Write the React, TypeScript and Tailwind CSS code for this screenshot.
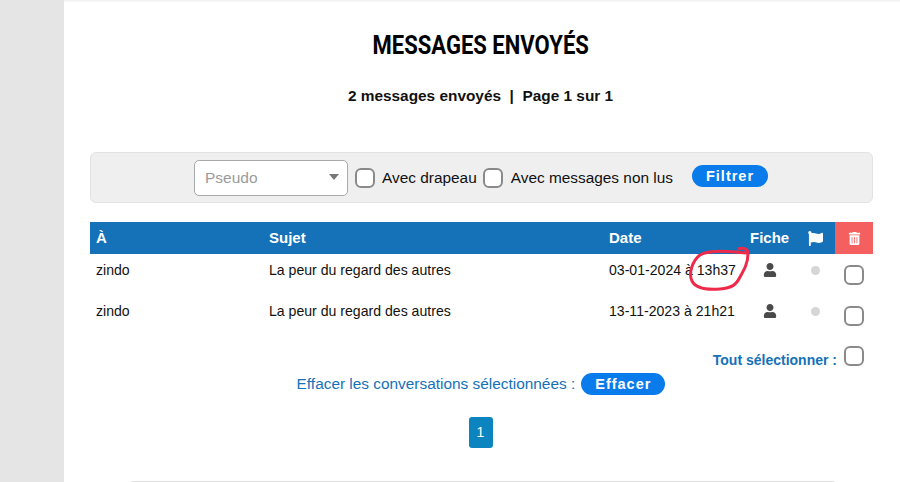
import { FaFlag, FaTrashAlt, FaUser } from 'react-icons/fa'

const rows = [
  { to: 'zindo', subject: 'La peur du regard des autres', date: '03-01-2024 à 13h37' },
  { to: 'zindo', subject: 'La peur du regard des autres', date: '13-11-2023 à 21h21' },
]

const columns = 'grid grid-cols-[173px_340px_141px_58px_27px_38px] pl-[6px]'

function Checkbox({ className = '' }: { className?: string }) {
  return (
    <span className={`block size-[20px] shrink-0 rounded-[6px] border-2 border-[#8a8a8a] bg-white ${className}`} />
  )
}

function PillButton({ label }: { label: string }) {
  return (
    <button className="h-[22px] rounded-full bg-[#0a7bea] px-[14px] text-[14.5px] leading-[22px] font-bold tracking-[1px] text-white">
      {label}
    </button>
  )
}

export default function App() {
  return (
    <div className="flex h-[482px] overflow-hidden bg-[#e5e5e5] font-['Liberation_Sans',Arial,sans-serif] text-[14.1px] text-[#111]">
      <aside className="w-[64px] shrink-0" />

      <main className="relative flex-1 overflow-hidden bg-white px-[26px] shadow-[inset_0_3px_3px_-2px_rgba(0,0,0,0.08)]">
        <h1 className="mt-[30px] text-center font-['Roboto',sans-serif] text-[26px] leading-[30px] font-bold text-black">
          <span className="inline-block translate-x-[-1px] scale-x-[0.847] whitespace-nowrap">MESSAGES ENVOYÉS</span>
        </h1>

        <p className="mt-[27px] pr-[3px] text-center text-[15.4px] leading-[18px] font-bold">
          2 messages envoyés &nbsp;|&nbsp; Page 1 sur 1
        </p>

        <form className="mt-[47px] flex h-[51px] w-[783px] items-center rounded-[6px] border border-[#e2e2e2] bg-[#efefef] pl-[103px] text-[15.4px]">
          <div className="flex h-[36px] w-[154px] items-center justify-between rounded-[5px] border border-[#a9a9a9] bg-white pr-[8px] pl-[10px] text-[15.5px] text-[#9b9b9b]">
            Pseudo
            <span className="mt-[-2px] border-x-[5px] border-t-[6px] border-x-transparent border-t-[#777]" />
          </div>
          <Checkbox className="ml-[7px]" />
          <span className="ml-[7px]">Avec drapeau</span>
          <Checkbox className="ml-[6px]" />
          <span className="ml-[8px]">Avec messages non lus</span>
          <span className="mt-[-4px] ml-[19px] flex">
            <PillButton label="Filtrer" />
          </span>
        </form>

        <div className="mt-[19px] w-[783px]">
          <div className={`${columns} h-[32px] items-center bg-[#1571b8] text-[15px] font-bold text-white`}>
            <span>À</span>
            <span>Sujet</span>
            <span>Date</span>
            <span>Fiche</span>
            <span className="flex">
              <FaFlag className="size-[15px]" />
            </span>
            <span className="flex h-[32px] items-center justify-center bg-[#f45f5f]">
              <FaTrashAlt className="size-[13px]" />
            </span>
          </div>

          {rows.map((row) => (
            <div key={row.date} className={`${columns} h-[41px] items-center`}>
              <span className="mt-[-8px]">{row.to}</span>
              <span className="mt-[-8px]">{row.subject}</span>
              <span className="mt-[-8px] whitespace-nowrap">{row.date}</span>
              <span className="mt-[-10px] pl-[13px]">
                <FaUser className="size-[14px] text-[#4a4a4a]" />
              </span>
              <span className="mt-[-9px] ml-[3px] size-[9px] rounded-full bg-[#d6d6d6]" />
              <span className="flex justify-center">
                <Checkbox />
              </span>
            </div>
          ))}

          <div className="mt-[9px] flex h-[22px] items-center justify-end pr-[9px]">
            <span className="mt-[8px] mr-[7px] text-[14px] font-bold text-[#1571b8]">Tout sélectionner :</span>
            <Checkbox />
          </div>

          <div className="mt-[5px] flex items-center justify-center pr-[1px]">
            <span className="mr-[6px] text-[15.4px] text-[#1571b8]">Effacer les conversations sélectionnées :</span>
            <PillButton label="Effacer" />
          </div>

          <div className="mt-[22px] flex justify-center pr-[2px]">
            <span className="flex h-[31px] w-[24px] items-center justify-center rounded-[3px] bg-[#0b84c0] text-[14px] text-white">
              1
            </span>
          </div>
        </div>

        <div className="mt-[33px] ml-[38px] h-[20px] w-[710px] rounded-t-[6px] border-t-2 border-[#dedede]" />

        <svg
          viewBox="0 0 70 50"
          className="pointer-events-none absolute top-[246px] left-[624px] h-[50px] w-[70px] fill-none stroke-[#ee2a4a] stroke-[3]"
        >
          <path d="M50 3 C56 1 60 3 60 8 C60 17 56 24 52 31 C48 39 44 42 32 43 C20 44 8 43 4 35 C0 27 5 14 12 9 C22 3 42 6 59 7" />
        </svg>
      </main>
    </div>
  )
}
